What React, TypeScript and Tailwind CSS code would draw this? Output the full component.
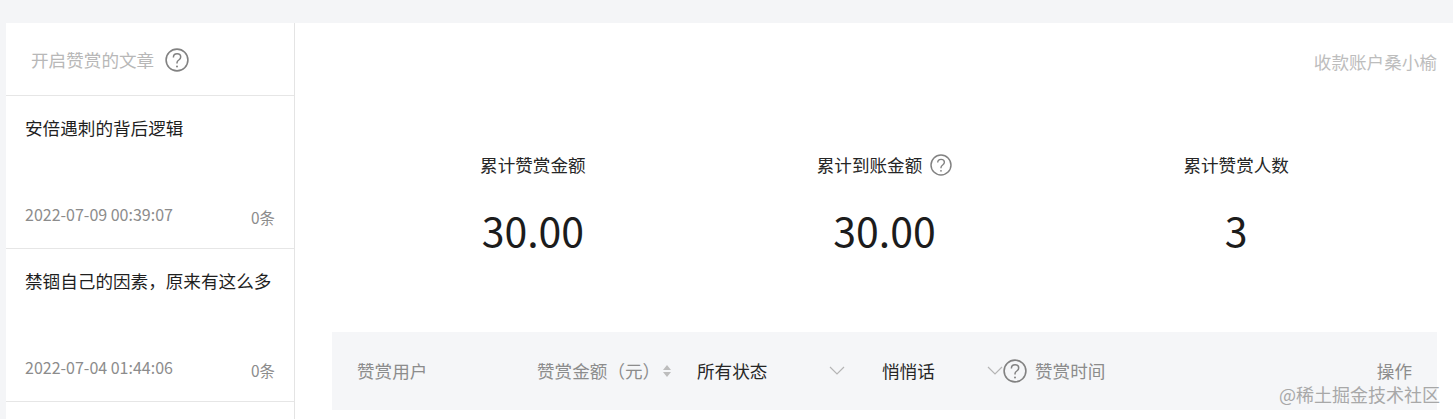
import React from "react";

const font = "[font-family:'Noto_Sans_CJK_SC','Noto_Sans',sans-serif]";

const articles = [
  { title: "安倍遇刺的背后逻辑", date: "2022-07-09 00:39:07" },
  { title: "禁锢自己的因素\uFF0C原来有这么多", date: "2022-07-04 01:44:06" },
];

const HelpIcon = ({ size }: { size: number }) => (
  <svg width={size} height={size} viewBox="0 0 24 24" fill="none" stroke="#828282" className="shrink-0">
    <circle cx="12" cy="12" r="10.9" strokeWidth="1.6" />
    <path d="M8.4 9.4c0-2.2 1.6-3.6 3.7-3.6s3.6 1.3 3.6 3.2c0 1.5-.8 2.2-1.9 3-1.2.8-1.8 1.4-1.8 2.8v.7" strokeWidth="1.5" />
    <circle cx="12" cy="18.4" r="1" fill="#828282" stroke="none" />
  </svg>
);

const Chevron = () => (
  <svg width="16" height="9" viewBox="0 0 16 9" fill="none" stroke="#b5b5b5" strokeWidth="1.2">
    <path d="M1 1l7 7 7-7" />
  </svg>
);

const Stat = ({ label, value, help }: { label: string; value: string; help?: boolean }) => (
  <div className="flex flex-1 flex-col items-center">
    <div className="flex h-[26px] items-center gap-2 text-[17.6px] text-[#262626]">
      {label}
      {help && <HelpIcon size={22} />}
    </div>
    <div className="mt-[24px] text-[41px] leading-[54px] text-[#1c1c1c]">{value}</div>
  </div>
);

export default function App() {
  return (
    <div className={`relative h-[419px] overflow-hidden bg-[#f4f5f7] pt-[23px] pl-[6px] ${font}`}>
      <div className="flex h-[396px] bg-white">
        <aside className="w-[289px] shrink-0 border-r border-[#e4e4e4]">
          <div className="flex h-[73px] items-center gap-[11px] border-b border-[#e6e6e6] pt-[2px] pl-[25px] text-[17.6px] text-[#b8b8b8]">
            开启赞赏的文章
            <HelpIcon size={24} />
          </div>
          {articles.map((a) => (
            <div key={a.date} className="flex h-[153px] flex-col justify-between border-b border-[#e6e6e6] pt-[19px] pr-[19px] pb-[21px] pl-[19px]">
              <div className="text-[17.6px] leading-[26px] text-[#1f1f1f]">{a.title}</div>
              <div className="flex items-end justify-between text-[#8c8c8c]">
                <span className="mb-[2px] text-[16px] leading-[22px]">{a.date}</span>
                <span className="text-[15.4px] leading-[20px]">0条</span>
              </div>
            </div>
          ))}
        </aside>

        <main className="flex-1 pr-[16px] pl-[37px]">
          <div className="flex h-[78px] items-center justify-end text-[17.6px] text-[#bdbdbd]">收款账户桑小榆</div>
          <div className="mt-[51px] flex px-[25px]">
            <Stat label="累计赞赏金额" value="30.00" />
            <Stat label="累计到账金额" value="30.00" help />
            <Stat label="累计赞赏人数" value="3" />
          </div>
          <div className="mt-[76px] flex h-[78px] items-center bg-[#f5f6f8] px-[25px] text-[17.6px] text-[#8c8c8c]">
            <span className="w-[180px]">赞赏用户</span>
            <span className="flex w-[160px] items-center gap-[5px]">
              {"赞赏金额\uFF08元\uFF09"}
              <svg width="10" height="14" viewBox="0 0 10 14" fill="#bdbdbd" className="-ml-[3px]">
                <path d="M5 1l4 5H1zM5 13L1 8h8z" />
              </svg>
            </span>
            <span className="flex w-[185px] items-center text-[#262626]">
              所有状态
              <span className="ml-[62px]"><Chevron /></span>
            </span>
            <span className="flex w-[153px] items-center text-[#262626]">
              悄悄话
              <span className="ml-[52px]"><Chevron /></span>
              <HelpIcon size={24} />
            </span>
            <span className="flex-1">赞赏时间</span>
            <span>操作</span>
          </div>
        </main>
      </div>
      <div className="absolute top-[381px] right-[13px] text-[18px] leading-[26px] text-[#a8a8a8]">@稀土掘金技术社区</div>
    </div>
  );
}
